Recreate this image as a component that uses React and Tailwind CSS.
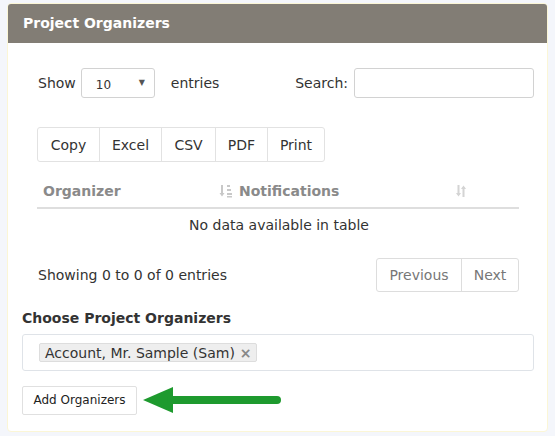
import React from 'react';

const SortAmountIcon = () => (
  <svg width="14" height="14" viewBox="0 0 14 14" className="text-[#c8c8c8]">
    <path d="M3 1v10" stroke="currentColor" strokeWidth="2" />
    <path d="M0.5 9L3 12.5L5.5 9z" fill="currentColor" />
    <rect x="8" y="1" width="3" height="2" fill="currentColor" />
    <rect x="8" y="5" width="4" height="2" fill="currentColor" />
    <rect x="8" y="9" width="5" height="2" fill="currentColor" />
    <rect x="8" y="12" width="5" height="1.5" fill="currentColor" />
  </svg>
);

const SortBothIcon = () => (
  <svg width="12" height="14" viewBox="0 0 12 14" className="text-[#d4d4d4]">
    <path d="M3.5 1v10" stroke="currentColor" strokeWidth="2" />
    <path d="M1 9L3.5 12.5L6 9z" fill="currentColor" />
    <path d="M8.5 3v10" stroke="currentColor" strokeWidth="2" />
    <path d="M6 5L8.5 1.5L11 5z" fill="currentColor" />
  </svg>
);

const App = () => {
  const buttons = [
    { label: 'Copy', w: 'w-[61px]' },
    { label: 'Excel', w: 'w-[62px]' },
    { label: 'CSV', w: 'w-[54px]' },
    { label: 'PDF', w: 'w-[52px]' },
    { label: 'Print', w: 'w-[57px]' },
  ];

  return (
    <div
      className="w-[555px] h-[436px] bg-[#f4f6fb] pt-[3px] px-[7px] text-[14px] leading-[20px] text-[#333]"
      style={{ fontFamily: '"DejaVu Sans", Verdana, sans-serif' }}
    >
      <div className="h-[429px] w-[541px] bg-white border border-[#fbf6d6] rounded-[4px] overflow-hidden">
        {/* Header */}
        <div className="h-[39px] bg-[#827d75] px-[15px] flex items-center pb-[1px]">
          <h2 className="text-white font-bold text-[14px]">Project Organizers</h2>
        </div>

        <div className="px-[14px]">
          <div className="pl-[15px]">
            {/* Length + search */}
            <div className="mt-[25px] h-[30px] w-[497px] flex items-center">
              <span className="ml-[1px]">Show</span>
              <div className="ml-[5px] w-[74px] h-[30px] border border-[#d2d2d2] rounded-[3px] flex items-center justify-between pl-[14px] pr-[9px] text-[12px]">
                <span className="mt-[3px]">10</span>
                <span className="text-[8px] text-[#555]">▼</span>
              </div>
              <span className="ml-[16px]">entries</span>
              <span className="ml-auto mr-[6px]">Search:</span>
              <div className="w-[180px] h-[30px] border border-[#d2d2d2] rounded-[3px]"></div>
            </div>

            {/* Export buttons */}
            <div className="mt-[29px] flex h-[35px] w-fit border border-[#e2e2e2] rounded-[3px]">
              {buttons.map((b, i) => (
                <div
                  key={b.label}
                  className={`${b.w} flex items-center justify-center ${i > 0 ? 'border-l border-[#e2e2e2]' : ''}`}
                >
                  {b.label}
                </div>
              ))}
            </div>

            {/* Table */}
            <div className="mt-[13px] w-[482px]">
              <div className="h-[34px] flex items-center border-b-2 border-[#dedede] font-bold text-[#8a8a8a]">
                <div className="w-[202px] pl-[6px] flex items-center justify-between pr-[6px]">
                  <span>Organizer</span>
                  <SortAmountIcon />
                </div>
                <div className="flex-1 flex items-center justify-between pr-[52px]">
                  <span>Notifications</span>
                  <SortBothIcon />
                </div>
              </div>
              <div className="h-[31px] flex items-center justify-center pl-[2px]">No data available in table</div>
            </div>

            {/* Info + pagination */}
            <div className="mt-[18px] w-[482px] flex items-center justify-between">
              <span className="ml-[1px]">Showing 0 to 0 of 0 entries</span>
              <div className="flex h-[34px] border border-[#dddddd] rounded-[3px] text-[#777]">
                <div className="w-[84px] flex items-center justify-center">Previous</div>
                <div className="w-[57px] flex items-center justify-center border-l border-[#dddddd]">Next</div>
              </div>
            </div>
          </div>

          {/* Choose organizers */}
          <div className="mt-[16px] font-bold text-[#333]">Choose Project Organizers</div>
          <div className="mt-[6px] w-[512px] h-[37px] border border-[#dfe3e8] rounded-[3px] flex items-center pl-[16px]">
            <div className="h-[19px] flex items-center bg-[#eeeeee] border border-[#dddddd] rounded-[2px] pl-[5px] pr-[4px]">
              <span>Account, Mr. Sample (Sam)</span>
              <span className="ml-[5px] text-[#888] font-bold text-[14px]">×</span>
            </div>
          </div>

          <div className="mt-[14px] flex items-center">
            <div className="w-[115px] h-[29px] border border-[#e0e0e0] rounded-[2px] flex items-center justify-center text-[12px] text-[#222]">
              Add Organizers
            </div>
            <svg width="140" height="30" viewBox="0 0 140 30" className="ml-[6px]">
              <path d="M0 15L30 2V28z" fill="#1e9a2e" />
              <path d="M28 15H134" stroke="#1e9a2e" strokeWidth="8" strokeLinecap="round" />
            </svg>
          </div>
        </div>
      </div>
    </div>
  );
};

export default App;
